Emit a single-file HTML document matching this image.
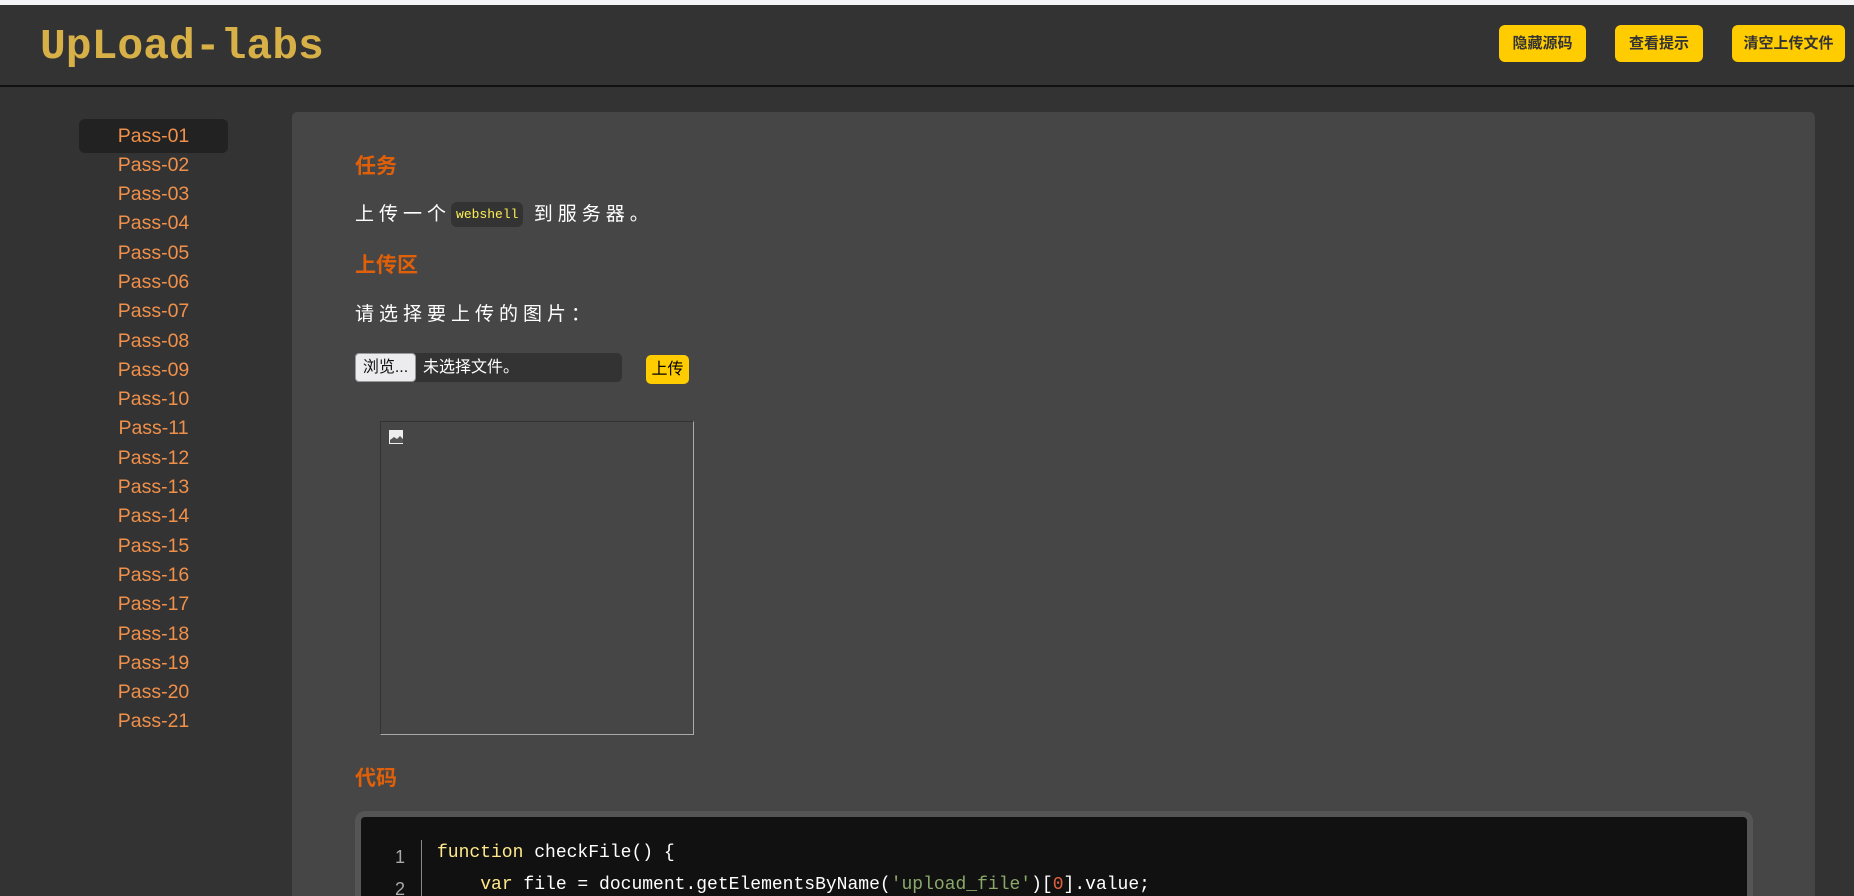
<!DOCTYPE html>
<html><head><meta charset="utf-8">
<style>
*{margin:0;padding:0;box-sizing:border-box}
html,body{width:1854px;height:896px;overflow:hidden;background:#333;font-family:"Liberation Sans","Noto Sans CJK SC",sans-serif}
.top{position:absolute;left:0;top:0;width:1854px;height:5px;background:#f4f4f6}
.hdr{position:absolute;left:0;top:5px;width:1854px;height:82px;background:#333;border-bottom:2px solid #111}
.logo{position:absolute;left:40px;top:14px;font-family:"Liberation Mono",monospace;font-weight:bold;font-size:43px;color:#d8b048;line-height:56px}
.btn{position:absolute;top:20px;height:37px;background:#ffcc00;border-radius:6px;color:#333;font-weight:bold;font-size:15px;line-height:37px;text-align:center}
.side{position:absolute;left:79px;top:121.5px;width:149px;z-index:1}
.side div{position:relative;height:29.3px;line-height:29.3px;text-align:center;color:#f0904a;font-size:19.5px}
.side .act::before{content:"";position:absolute;left:0;right:0;top:-2.5px;bottom:-2.5px;background:#222;border-radius:6px;z-index:-1}
.main{position:absolute;left:292px;top:112px;width:1523px;height:784px;background:#464646;border-radius:5px 5px 0 0;overflow:hidden}
h2{position:absolute;left:63px;color:#e0600a;font-size:21px;font-weight:bold}
.p{position:absolute;left:63px;color:#fff;font-size:19px;letter-spacing:5px}
code{font-family:"Liberation Mono",monospace;font-size:13px;color:#ffee55;background:#333;border-radius:6px;padding:5px 5px;letter-spacing:0;vertical-align:2px}
.file{position:absolute;left:63px;top:241px;width:267px;height:29px;background:#333;border-radius:5px;color:#fff;font-size:16px}
.file span.b{position:absolute;left:0;top:0;width:61px;height:29px;background:#ececef;border:1px solid #999;border-radius:4px;color:#111;line-height:27px;text-align:center}
.file span.t{position:absolute;left:68px;top:0;line-height:29px}
.up{position:absolute;left:354px;top:243px;width:43px;height:29px;background:#ffcc00;border-radius:5px;color:#000;font-size:16px;line-height:29px;text-align:center}
.img{position:absolute;left:88px;top:309px;width:314px;height:314px;border-top:1px solid #333;border-left:1px solid #333;border-right:1px solid #aaa;border-bottom:1px solid #aaa}
.code{position:absolute;left:63px;top:699px;width:1398px;height:85px;background:#555;border-radius:10px 10px 0 0;padding:6px 6px 0}
.ci{width:100%;height:100%;background:#111;border-radius:4px 4px 0 0;position:relative;overflow:hidden}
.ln{position:absolute;left:14px;top:24px;width:30px;color:#aaa;font-family:"Liberation Sans",sans-serif;font-size:18px;line-height:32px;text-align:right}
.sep{position:absolute;left:60px;top:23px;width:1px;height:120px;background:#888}
.src{position:absolute;left:76px;top:20px;font-family:"Liberation Mono",monospace;font-size:18px;line-height:32px;color:#fff;white-space:pre}
.k{color:#ffe98a}.s{color:#8aa86a}.n{color:#e06040}
</style></head><body>
<div class="top"></div>
<div class="hdr">
<div class="logo">UpLoad-labs</div>
<div class="btn" style="left:1499px;width:87px">隐藏源码</div>
<div class="btn" style="left:1615px;width:88px">查看提示</div>
<div class="btn" style="left:1732px;width:113px">清空上传文件</div>
</div>
<div class="side">
<div class="act">Pass-01</div><div>Pass-02</div><div>Pass-03</div><div>Pass-04</div><div>Pass-05</div><div>Pass-06</div><div>Pass-07</div><div>Pass-08</div><div>Pass-09</div><div>Pass-10</div><div>Pass-11</div><div>Pass-12</div><div>Pass-13</div><div>Pass-14</div><div>Pass-15</div><div>Pass-16</div><div>Pass-17</div><div>Pass-18</div><div>Pass-19</div><div>Pass-20</div><div>Pass-21</div>
</div>
<div class="main">
<h2 style="top:38px">任务</h2>
<div class="p" style="top:87px">上传一个<code>webshell</code> 到服务器。</div>
<h2 style="top:137px">上传区</h2>
<div class="p" style="top:187px">请选择要上传的图片：</div>
<div class="file"><span class="b">浏览...</span><span class="t">未选择文件。</span></div>
<div class="up">上传</div>
<div class="img"><svg width="16" height="16" style="position:absolute;left:7px;top:7px"><rect x="1" y="1" width="14" height="14" fill="#eee"/><path d="M2 11l4-3 3 2 3-3 3 3v4H2z" fill="#555"/></svg></div>
<h2 style="top:650px">代码</h2>
<div class="code"><div class="ci">
<div class="ln">1<br>2</div><div class="sep"></div>
<div class="src"><span class="k">function</span> checkFile() {
    <span class="k">var</span> file = document.getElementsByName(<span class="s">'upload_file'</span>)[<span class="n">0</span>].value;</div>
</div></div>
</div>
</body></html>
